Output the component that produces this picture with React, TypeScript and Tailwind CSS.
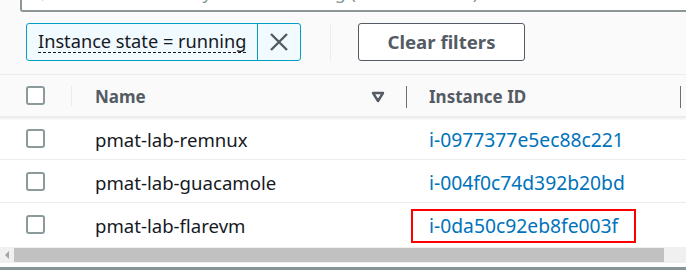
import React from "react";

const Check = () => (
  <div className="w-[19px] h-[19px] rounded-[3px] border-2 border-[#8c9a9b] bg-white" />
);

const rows = [
  { name: "pmat-lab-remnux", id: "i-0977377e5ec88c221" },
  { name: "pmat-lab-guacamole", id: "i-004f0c74d392b20bd" },
  { name: "pmat-lab-flarevm", id: "i-0da50c92eb8fe003f", hl: true },
];

export default function App() {
  return (
    <div
      className="w-[686px] h-[270px] overflow-hidden bg-white text-[#16191f] relative"
      style={{ fontFamily: '"Noto Sans", "Open Sans", sans-serif' }}
    >
      <div className="bg-[#fafafa] pl-[20px] h-[75px] border-b border-[#eaeded]">
        <div className="h-[12px] relative overflow-hidden -mr-2 border-b-2 border-l-2 border-[#8d9696] rounded-bl-[3px] bg-white">
          <div className="absolute left-[20px] top-[-21px] flex items-center gap-[16px] text-[#879596] text-[18px] whitespace-nowrap">
            <svg width="16" height="20" viewBox="0 0 16 20"><circle cx="8" cy="7" r="6" fill="none" stroke="#545b64" strokeWidth="2" /><line x1="4" y1="12" x2="0" y2="17" stroke="#545b64" strokeWidth="2" /></svg>
            <span>Find Instance by attribute or tag (case-sensitive)</span>
          </div>
        </div>
        <div className="flex items-center mt-[11px] pl-[6px]">
          <div className="flex h-[38px] w-[275px] border border-[#00a1c9] rounded-[3px] bg-[#f1faff]">
            <div className="flex items-center pl-[11px] pr-[11px] border-r border-[#00a1c9] whitespace-nowrap">
              <span className="text-[18.2px] text-[#16191f] leading-[21px] border-b border-dashed border-[#16191f]">Instance state = running</span>
            </div>
            <div className="flex-1 flex items-center justify-center">
              <svg width="20" height="20" viewBox="0 0 20 20"><path d="M2 2 L18 18 M18 2 L2 18" stroke="#545b64" strokeWidth="2.4" /></svg>
            </div>
          </div>
          <div className="w-px h-[38px] bg-[#eaeded] ml-[29px]" />
          <button className="ml-[27px] h-[38px] w-[167px] rounded-[3px] border border-[#545b64] bg-white text-[#545b64] font-bold text-[18.6px]">
            Clear filters
          </button>
        </div>
      </div>
      <div className="flex items-center h-[42px] bg-[#fafafa] shadow-[0_2px_2px_rgba(0,0,0,0.08)] relative border-b border-[#eaeded]">
        <div className="w-[72px] flex items-center">
          <div className="ml-[26px]"><Check /></div>
          <div className="ml-[26px] w-px h-[20px] bg-[#eaeded]" />
        </div>
        <div className="w-[335px] flex items-center pl-[23px] font-bold text-[17px] text-[#545b64] pt-[2px]">
          <span className="flex-1">Name</span>
          <svg width="14" height="12" viewBox="0 0 14 12" className="mr-[21px]"><path d="M2 2 L12 2 L7 10 Z" fill="none" stroke="#545b64" strokeWidth="2.4" strokeLinejoin="round" /></svg>
          <div className="w-px h-[22px] bg-[#687078]" />
        </div>
        <div className="flex-1 flex items-center pl-[22px] font-bold text-[17px] text-[#545b64] pt-[2px]">
          <span className="flex-1">Instance ID</span>
          <div className="w-px h-[22px] bg-[#687078] mr-[5px]" />
        </div>
      </div>
      {rows.map((r, i) => (
        <div key={i} className={`flex items-center h-[43px] pt-[3px] ${i < 2 ? "border-b border-[#eaeded]" : ""}`}>
          <div className="w-[72px] pl-[26px] -mt-[3px]"><Check /></div>
          <div className="w-[335px] pl-[23px] text-[18.6px] text-[#16191f] whitespace-nowrap">{r.name}</div>
          <div className="flex-1 pl-[4px] text-[19.3px] text-[#0073bb] whitespace-nowrap">
            <span className={`inline-block px-[16px] pt-[2px] pb-[3px] leading-[25px] ${r.hl ? "border-2 border-[#ff0000]" : "border-2 border-transparent"}`}>{r.id}</span>
          </div>
        </div>
      ))}
      <div className="absolute left-0 right-0 top-[247px] h-[16px] bg-[#f0f0f0] flex items-center">
        <svg width="14" height="16" viewBox="0 0 14 16"><path d="M9 4 L5 8 L9 12 Z" fill="#a3a3a3" /></svg>
        <div className="h-[14px] w-[650px] bg-[#c1c1c1]" />
      </div>
      <div className="absolute left-0 right-0 top-[267px] h-[3px] bg-[#879596]" />
    </div>
  );
}
